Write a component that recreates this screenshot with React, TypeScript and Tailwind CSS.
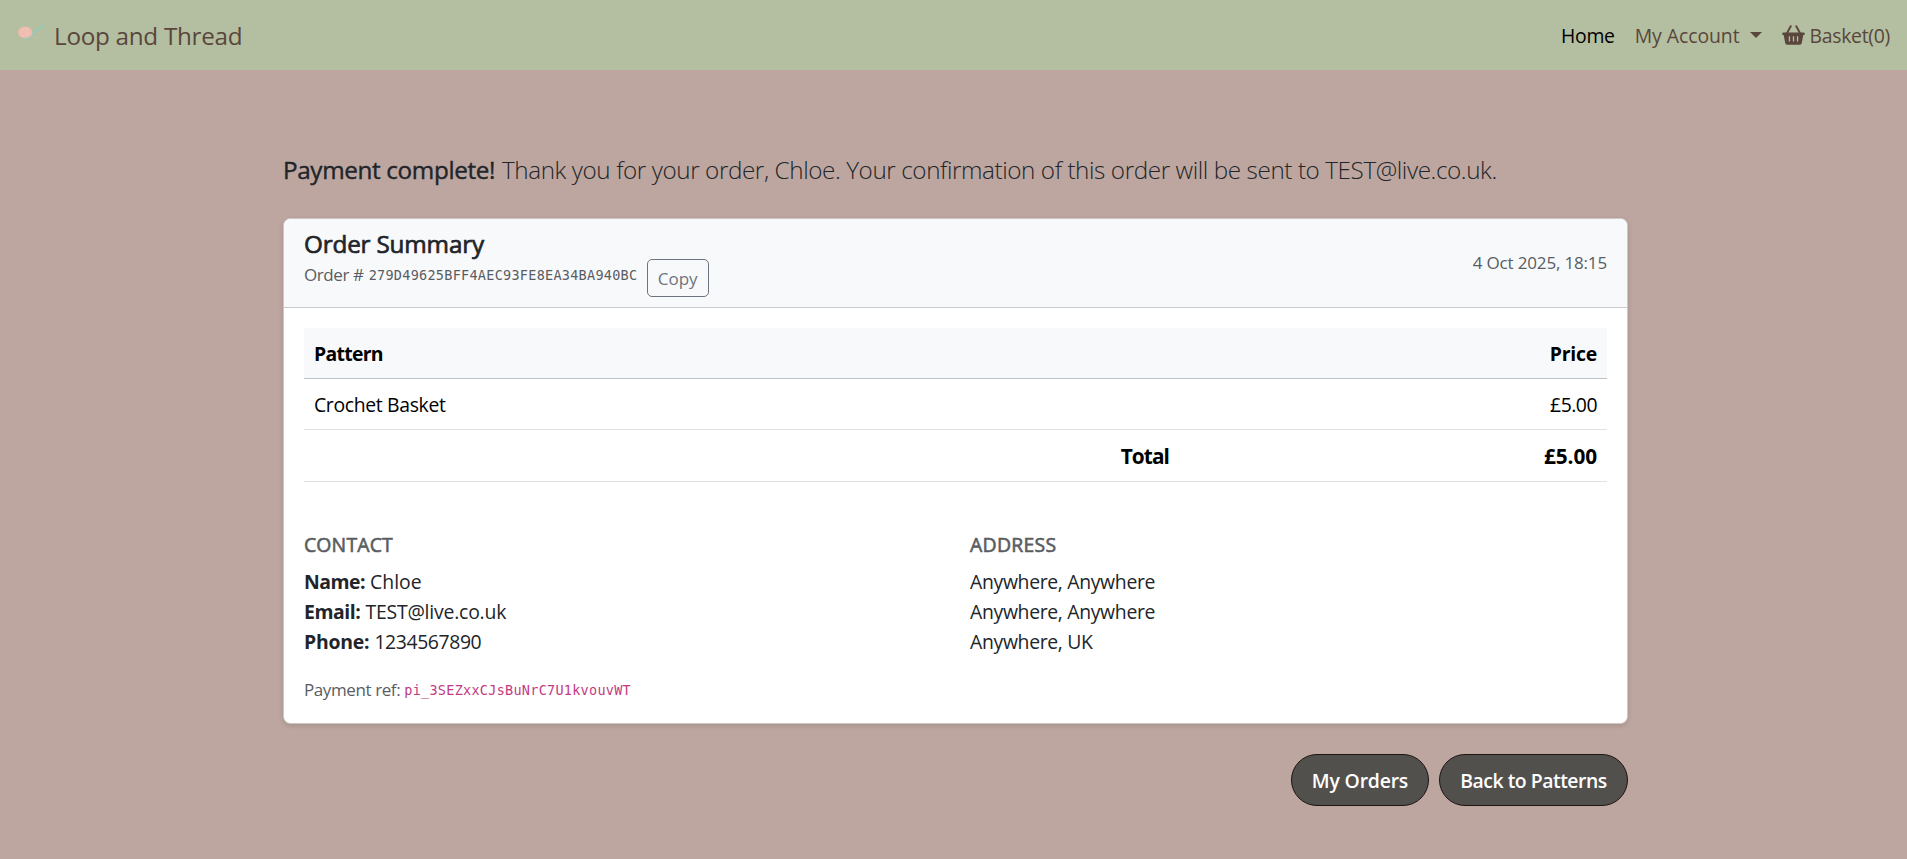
import React from "react";

function YarnLogo() {
  return (
    <svg width="27" height="20" viewBox="0 0 27 20" className="shrink-0" aria-hidden="true">
      <path d="M8 14.500C12 15 12 11 16 8.500L25 1.500" fill="none" stroke="#93cbbd" strokeWidth="1.700" />
      <path d="M15 13q3 1 6 0" fill="none" stroke="#c2bfa8" strokeWidth="1" opacity="0.7" />
      <ellipse cx="7.200" cy="8.300" rx="7.200" ry="5.900" fill="#efbbae" />
      <path d="M2.500 7q4-4 8.500-1M2.500 9.500q4-4 9 0M4 12q3-3 7-1" fill="none" stroke="#f3c9be" strokeWidth="0.8" />
    </svg>
  );
}

function BasketIcon() {
  return (
    <svg width="23" height="20" viewBox="0 0 23 20" className="mr-[5px] -mt-[2px] shrink-0" aria-hidden="true">
      <path d="M8.700 1.200L4.800 8.500M14.300 1.200L18.200 8.500" fill="none" stroke="currentColor" strokeWidth="1.900" strokeLinecap="round" />
      <path
        fill="currentColor"
        fillRule="evenodd"
        d="M1.200 7.500h20.600a.9.9 0 0 1 .9.900v.8a.9.900 0 0 1-.9.900h-.5l-1.500 8a2 2 0 0 1-2 1.700H5.200a2 2 0 0 1-2-1.700l-1.500-8h-.5a.9.900 0 0 1-.9-.9v-.8a.9.900 0 0 1 .9-.9zM6.800 11.300v5.200h1.300v-5.200zM10.850 11.300v5.200h1.300v-5.200zM14.900 11.300v5.200h1.300v-5.200z"
      />
    </svg>
  );
}

function Navbar() {
  return (
    <nav className="flex h-[70px] items-center justify-between bg-[#b3bfa0] pl-[18px] pr-[17px] text-[#5a463c]">
      <a className="flex items-center">
        <span className="-mt-[3px]"><YarnLogo /></span>
        <span className="ml-[9px] mt-[2px] text-[24.25px] tracking-[-0.28px]">Loop and Thread</span>
      </a>
      <div className="flex items-center pt-[2px] text-[19.4px]">
        <a className="tracking-[-0.3px] text-black">Home</a>
        <a className="ml-[20px] flex items-center tracking-[-0.05px]">
          My Account
          <span className="-mt-[3px] ml-[10px] border-x-[6px] border-t-[6px] border-x-transparent border-t-[#5a463c]" />
        </a>
        <a className="ml-[20px] flex items-center tracking-[-0.29px]">
          <BasketIcon />
          Basket(0)
        </a>
      </div>
    </nav>
  );
}

function OrderHeader() {
  return (
    <div className="flex h-[89px] items-center justify-between border-b border-[#c8cacc] bg-[#f8f9fb] px-[20px]">
      <div className="h-[68px]">
        <h5 className="text-[24.25px] leading-[29px] tracking-[-0.16px] [-webkit-text-stroke:0.7px_#212529]">Order Summary</h5>
        <div className="flex items-start text-[17px] leading-[26px] text-[#595d62]">
          <span className="mt-[4px] tracking-[-0.4px]">Order #</span>
          <span className="ml-[5px] mt-[4px] w-[270px] whitespace-nowrap font-['DejaVu_Sans_Mono',monospace] text-[13.5px] tracking-[0.27px]">
            279D49625BFF4AEC93FE8EA34BA940BC
          </span>
          <button className="ml-[8px] mt-[1px] h-[38px] w-[62px] rounded-[5px] border border-[#6c757d] pt-[2px] text-[17px] text-[#6c757d]">Copy</button>
        </div>
      </div>
      <span className="text-[17px] tracking-[-0.16px] text-[#595d62]">4 Oct 2025, 18:15</span>
    </div>
  );
}

function OrderTable() {
  return (
    <div className="text-black">
      <div className="flex h-[51px] items-center justify-between border-b border-[#c0c3c5] bg-[#f8f9fa] px-[10px] pt-[2px] font-bold">
        <span className="tracking-[-0.7px]">Pattern</span>
        <span className="tracking-[-0.22px]">Price</span>
      </div>
      <div className="flex h-[51px] items-center justify-between border-b border-[#dee2e6] px-[10px] pt-[2px]">
        <span className="tracking-[-0.34px]">Crochet Basket</span>
        <span className="tracking-[-0.5px]">£5.00</span>
      </div>
      <div className="flex h-[52px] items-center border-b border-[#dee2e6] px-[10px] text-[20.8px] font-bold">
        <span className="w-[855px] text-right tracking-[-0.9px]">Total</span>
        <span className="flex-1 text-right tracking-[-0.1px]">£5.00</span>
      </div>
    </div>
  );
}

function OrderDetails() {
  return (
    <div className="grid grid-cols-[666px_1fr] leading-[30px]">
      <div>
        <h6 className="mb-[7px] tracking-[0.16px] text-[#595d62] [-webkit-text-stroke:0.6px_#595d62]">CONTACT</h6>
        <div><strong className="tracking-[-0.49px]">Name:</strong> <span>Chloe</span></div>
        <div><strong className="tracking-[-0.43px]">Email:</strong> <span className="tracking-[-0.2px]">TEST@live.co.uk</span></div>
        <div><strong className="tracking-[-0.22px]">Phone:</strong> <span className="tracking-[-0.4px]">1234567890</span></div>
      </div>
      <div>
        <h6 className="mb-[7px] tracking-[0.28px] text-[#595d62] [-webkit-text-stroke:0.6px_#595d62]">ADDRESS</h6>
        <div className="tracking-[-0.33px]">
          <div>Anywhere, Anywhere</div>
          <div>Anywhere, Anywhere</div>
          <div>Anywhere, UK</div>
        </div>
      </div>
    </div>
  );
}

function PillButton({ children, className }: { children: string; className: string }) {
  return (
    <button className={`h-[52px] rounded-full border border-[#1c1513] bg-[#52504d] pt-[1px] font-semibold text-white ${className}`}>
      {children}
    </button>
  );
}

export default function App() {
  return (
    <div className="min-h-screen bg-[#bda69f] font-['Open_Sans','Noto_Sans',sans-serif] text-[19.4px] leading-[30px] text-[#212529]">
      <Navbar />
      <main className="ml-[283px] w-[1345px] pt-[81px]">
        <p className="flex whitespace-nowrap text-[24.25px] leading-[37px]">
          <span className="tracking-[-0.35px] [-webkit-text-stroke:0.4px_#212529]">Payment complete!</span>
          <span className="ml-[7px] font-light tracking-[-0.41px]">
            Thank you for your order, Chloe. Your confirmation of this order will be sent to TEST@live.co.uk.
          </span>
        </p>
        <section className="mt-[30px] h-[506px] overflow-hidden rounded-[7.5px] border border-[#cdc6c4] bg-white shadow-[0_2px_5px_rgba(0,0,0,0.12)]">
          <OrderHeader />
          <div className="px-[20px] pt-[20px]">
            <OrderTable />
            <div className="mt-[48px]"><OrderDetails /></div>
            <p className="mt-[19px] flex text-[17px] leading-[28px] text-[#595d62]">
              <span className="tracking-[-0.4px]">Payment ref:</span>
              <code className="ml-[4px] font-['DejaVu_Sans_Mono',monospace] text-[13.5px] tracking-[0.27px] text-[#c23a82]">
                pi_3SEZxxCJsBuNrC7U1kvouvWT
              </code>
            </p>
          </div>
        </section>
        <div className="mt-[30px] flex justify-end gap-[10px]">
          <PillButton className="w-[138px] tracking-[-0.19px]">My Orders</PillButton>
          <PillButton className="w-[189px] tracking-[-0.48px]">Back to Patterns</PillButton>
        </div>
      </main>
    </div>
  );
}
